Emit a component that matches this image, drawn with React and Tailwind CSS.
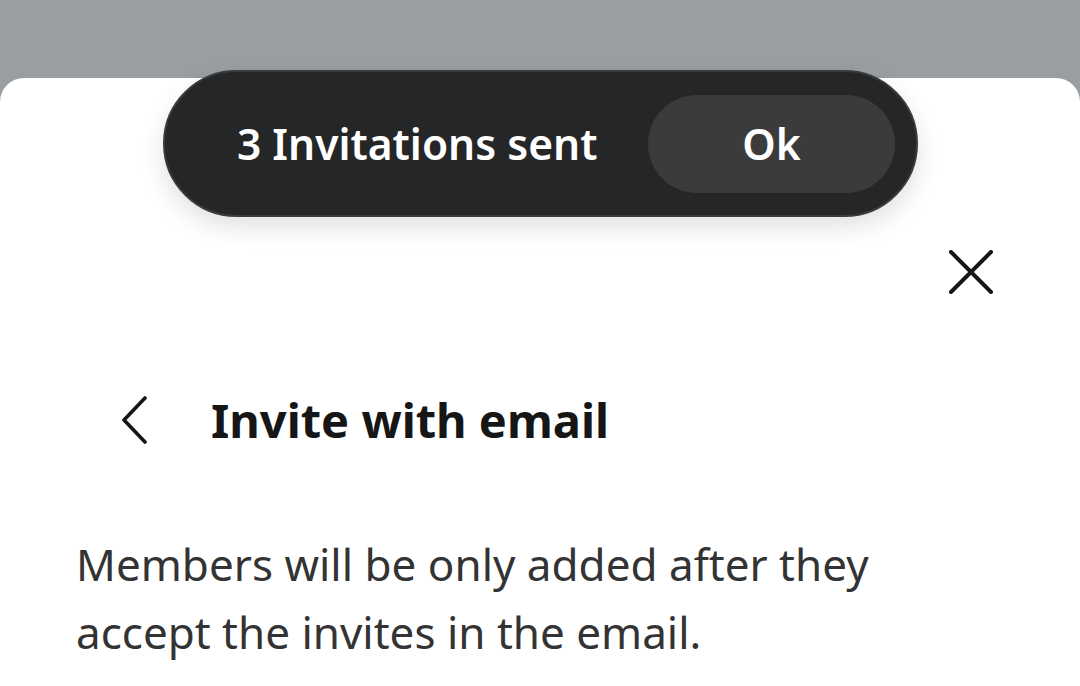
import React from 'react';

function CloseIcon() {
  return (
    <svg width="44" height="44" viewBox="0 0 44 44" fill="none" stroke="#161616" strokeWidth="4" strokeLinecap="round">
      <path d="M2 2 L42 42 M42 2 L2 42" />
    </svg>
  );
}

function BackIcon() {
  return (
    <svg width="30" height="48" viewBox="0 0 30 48" fill="none" stroke="#161616" strokeWidth="3.6" strokeLinecap="round" strokeLinejoin="round">
      <path d="M25 2 L4 24 L25 46" />
    </svg>
  );
}

function Toast() {
  return (
    <div className="absolute left-[163px] top-[70px] flex h-[147px] w-[755px] items-center justify-between rounded-full border-2 border-[#3a3b3c] bg-[#252627] pl-[72px] pr-[21px] shadow-[0_10px_24px_rgba(0,0,0,0.12)]">
      <span className="text-[42.5px] font-semibold text-white">3 Invitations sent</span>
      <button className="h-[98px] w-[247px] rounded-full bg-[#3b3b3c] text-[42.5px] font-semibold text-white">
        Ok
      </button>
    </div>
  );
}

export default function App() {
  return (
    <div className="relative h-[686px] w-[1080px] overflow-hidden bg-[#9a9ea1] font-['Noto_Sans',sans-serif]">
      <div className="mt-[78px] h-[608px] rounded-t-[24px] bg-white">
        <div className="flex justify-end pr-[87px] pt-[172px]">
          <CloseIcon />
        </div>
        <div className="mt-[102px] flex items-center pl-[120px]">
          <BackIcon />
          <h1 className="ml-[61px] text-[47px] font-bold leading-none text-[#161616]">Invite with email</h1>
        </div>
        <p className="mt-[86px] w-[900px] pl-[76px] text-[44px] leading-[68px] text-[#333]">
          Members will be only added after they accept the invites in the email.
        </p>
      </div>
      <Toast />
    </div>
  );
}
